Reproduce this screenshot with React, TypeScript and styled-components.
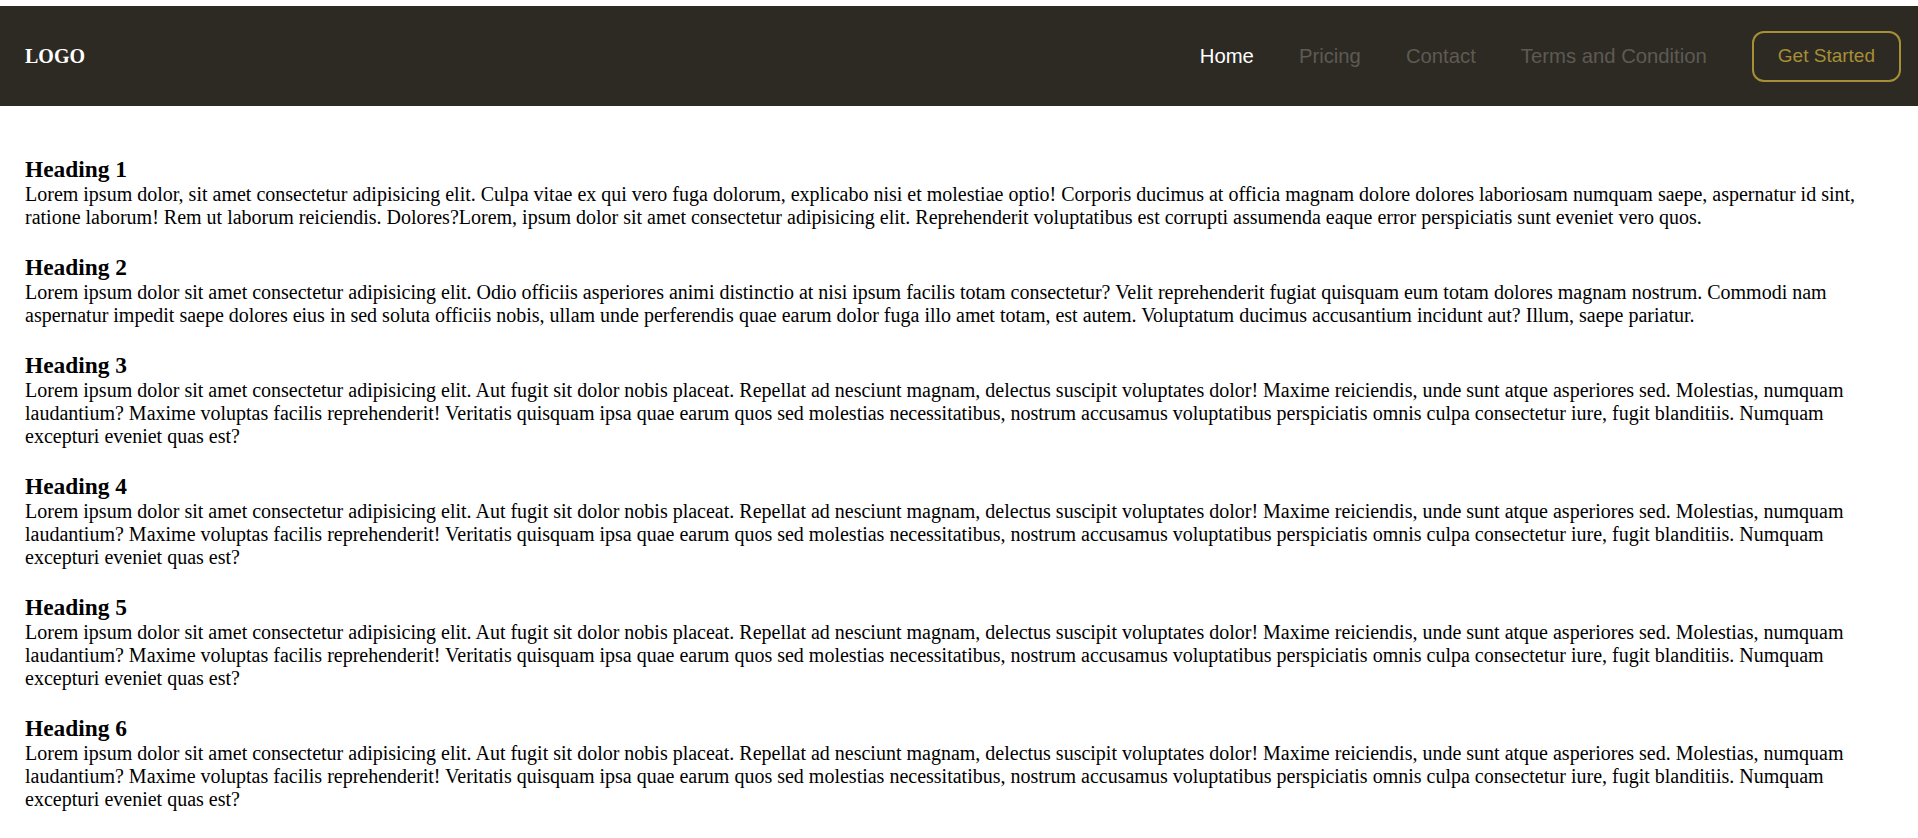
import React from "react";
import styled, { createGlobalStyle } from "styled-components";

const GlobalStyle = createGlobalStyle`
  * {
    box-sizing: border-box;
  }
  body {
    margin: 0;
    background-color: #ffffff;
    font-family: "Liberation Serif", "Times New Roman", serif;
    color: #000000;
  }
`;

const Page = styled.div`
  padding-top: 6px;
`;

const NavBar = styled.header`
  height: 100px;
  padding: 0 17px 0 25px;
  display: flex;
  align-items: center;
  justify-content: space-between;
  background-color: #2d2a24;
`;

const Logo = styled.div`
  font-family: "Liberation Serif", "Times New Roman", serif;
  font-weight: bold;
  font-size: 20px;
  color: #ffffff;
`;

const NavRight = styled.nav`
  display: flex;
  align-items: center;
  gap: 45px;
`;

const NavLink = styled.a<{ $active?: boolean }>`
  font-family: "Comic Sans MS", "Liberation Sans", sans-serif;
  font-size: 20.3px;
  text-decoration: none;
  cursor: pointer;
  color: ${(p) => (p.$active ? "#ffffff" : "#5d5a53")};
`;

const StartButton = styled.button`
  height: 51px;
  padding: 0 24px;
  border: 2px solid #a68f35;
  border-radius: 12px;
  background: transparent;
  color: #a68f35;
  font-family: "Comic Sans MS", "Liberation Sans", sans-serif;
  font-size: 19px;
  cursor: pointer;
`;

const Main = styled.main`
  padding: 50px 25px 0;
  display: flex;
  flex-direction: column;
  gap: 25px;
`;

const Section = styled.section`
  display: flex;
  flex-direction: column;
`;

const Heading = styled.h3`
  margin: 0;
  font-size: 23.4px;
  font-weight: bold;
`;

const Text = styled.p`
  margin: 0;
  font-size: 20px;
`;

const shared =
  "Lorem ipsum dolor sit amet consectetur adipisicing elit. Aut fugit sit dolor nobis placeat. Repellat ad nesciunt magnam, delectus suscipit voluptates dolor! Maxime reiciendis, unde sunt atque asperiores sed. Molestias, numquam laudantium? Maxime voluptas facilis reprehenderit! Veritatis quisquam ipsa quae earum quos sed molestias necessitatibus, nostrum accusamus voluptatibus perspiciatis omnis culpa consectetur iure, fugit blanditiis. Numquam excepturi eveniet quas est?";

const sections = [
  {
    title: "Heading 1",
    body: "Lorem ipsum dolor, sit amet consectetur adipisicing elit. Culpa vitae ex qui vero fuga dolorum, explicabo nisi et molestiae optio! Corporis ducimus at officia magnam dolore dolores laboriosam numquam saepe, aspernatur id sint, ratione laborum! Rem ut laborum reiciendis. Dolores?Lorem, ipsum dolor sit amet consectetur adipisicing elit. Reprehenderit voluptatibus est corrupti assumenda eaque error perspiciatis sunt eveniet vero quos.",
  },
  {
    title: "Heading 2",
    body: "Lorem ipsum dolor sit amet consectetur adipisicing elit. Odio officiis asperiores animi distinctio at nisi ipsum facilis totam consectetur? Velit reprehenderit fugiat quisquam eum totam dolores magnam nostrum. Commodi nam aspernatur impedit saepe dolores eius in sed soluta officiis nobis, ullam unde perferendis quae earum dolor fuga illo amet totam, est autem. Voluptatum ducimus accusantium incidunt aut? Illum, saepe pariatur.",
  },
  { title: "Heading 3", body: shared },
  { title: "Heading 4", body: shared },
  { title: "Heading 5", body: shared },
  { title: "Heading 6", body: shared },
];

const App = () => {
  return (
    <>
      <GlobalStyle />
      <Page>
        <NavBar>
          <Logo>LOGO</Logo>
          <NavRight>
            <NavLink $active>Home</NavLink>
            <NavLink>Pricing</NavLink>
            <NavLink>Contact</NavLink>
            <NavLink>Terms and Condition</NavLink>
            <StartButton>Get Started</StartButton>
          </NavRight>
        </NavBar>
        <Main>
          {sections.map((s) => (
            <Section key={s.title}>
              <Heading>{s.title}</Heading>
              <Text>{s.body}</Text>
            </Section>
          ))}
        </Main>
      </Page>
    </>
  );
};

export default App;
